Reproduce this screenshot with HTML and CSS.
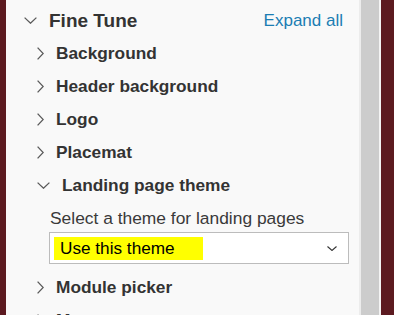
FILE: index.html
```html
<!DOCTYPE html>
<html lang="en">
<head>
    <meta charset="UTF-8">
    <meta name="viewport" content="width=device-width, initial-scale=1.0">
    <title>Fine Tune</title>
    <link rel="stylesheet" href="styles.css">
</head>
<body>
  <div class="frame">
    <div class="edge-left"></div>
    <div class="panel">
      <div class="head">
        <svg class="chev-down" width="13" height="7" viewBox="0 0 13 7"><path d="M0.6 0.6 L6.5 6.2 L12.4 0.6"/></svg>
        <span class="title">Fine Tune</span>
        <a class="expand" href="#">Expand all</a>
      </div>

      <div class="item">
        <svg class="chev-right" width="7" height="13" viewBox="0 0 7 13"><path d="M0.6 0.6 L6.2 6.5 L0.6 12.4"/></svg>
        <span>Background</span>
      </div>
      <div class="item">
        <svg class="chev-right" width="7" height="13" viewBox="0 0 7 13"><path d="M0.6 0.6 L6.2 6.5 L0.6 12.4"/></svg>
        <span>Header background</span>
      </div>
      <div class="item">
        <svg class="chev-right" width="7" height="13" viewBox="0 0 7 13"><path d="M0.6 0.6 L6.2 6.5 L0.6 12.4"/></svg>
        <span>Logo</span>
      </div>
      <div class="item">
        <svg class="chev-right" width="7" height="13" viewBox="0 0 7 13"><path d="M0.6 0.6 L6.2 6.5 L0.6 12.4"/></svg>
        <span>Placemat</span>
      </div>
      <div class="item">
        <svg class="chev-down" width="13" height="7" viewBox="0 0 13 7"><path d="M0.6 0.6 L6.5 6.2 L12.4 0.6"/></svg>
        <span>Landing page theme</span>
      </div>

      <div class="item-body">
        <label class="label">Select a theme for landing pages</label>
        <div class="select">
          <span class="mark">Use this theme</span>
          <svg class="sel-chev" width="10" height="5" viewBox="0 0 10 5"><path d="M0.5 0.5 L5 4.5 L9.5 0.5"/></svg>
        </div>
      </div>

      <div class="item">
        <svg class="chev-right" width="7" height="13" viewBox="0 0 7 13"><path d="M0.6 0.6 L6.2 6.5 L0.6 12.4"/></svg>
        <span>Module picker</span>
      </div>
      <div class="item">
        <svg class="chev-right" width="7" height="13" viewBox="0 0 7 13"><path d="M0.6 0.6 L6.2 6.5 L0.6 12.4"/></svg>
        <span>Menus</span>
      </div>
    </div>
    <div class="scroll"></div>
    <div class="gap"></div>
    <div class="edge-right"></div>
  </div>
</body>
</html>
```

FILE: styles.css
```css
* {
    margin: 0;
    padding: 0;
    box-sizing: border-box;
}
body {
    font-family: "Liberation Sans", Arial, sans-serif;
    color: #333;
    background: #f9f9f9;
    overflow: hidden;
}
.frame {
    display: flex;
    height: 315px;
    overflow: hidden;
}
.edge-left {
    width: 6px;
    background: #5c1a20;
}
.panel {
    width: 355px;
    background: #f9f9f9;
    border-right: 2px solid #ececec;
}
.scroll {
    width: 18px;
    background: #cccccc;
}
.gap {
    width: 2px;
    background: #f3f3f3;
}
.edge-right {
    flex: 1;
    background: #5c1a20;
}

svg path {
    fill: none;
    stroke: #5a5a5a;
    stroke-width: 1.3;
}

.head {
    display: flex;
    align-items: center;
    height: 33px;
    margin-top: 4px;
    padding-left: 18px;
    padding-right: 16px;
}
.head .chev-down {
    margin-right: 12px;
}
.title {
    font-size: 19px;
    font-weight: bold;
}
.expand {
    margin-left: auto;
    font-size: 17px;
    color: #1b7db3;
    text-decoration: none;
}

.item {
    display: flex;
    align-items: center;
    height: 33px;
    padding-left: 31px;
    font-size: 17.3px;
    font-weight: bold;
}
.item svg {
    margin-right: 12px;
}

.item-body {
    padding: 5px 10px 7px 43px;
}
.label {
    display: block;
    padding-left: 1px;
    font-size: 17.4px;
    line-height: 22px;
    color: #3a3a3a;
    margin-bottom: 3px;
}
.select {
    display: flex;
    align-items: center;
    height: 32px;
    background: #fff;
    border: 1px solid #bcbcbc;
    padding-left: 4px;
    padding-right: 11px;
}
.mark {
    font-size: 17.2px;
    line-height: 23px;
    color: #000;
    background: #ffff00;
    padding: 0 28px 0 6px;
}
.sel-chev {
    margin-left: auto;
}
.sel-chev path {
    stroke: #333;
    stroke-width: 1.1;
}
```
